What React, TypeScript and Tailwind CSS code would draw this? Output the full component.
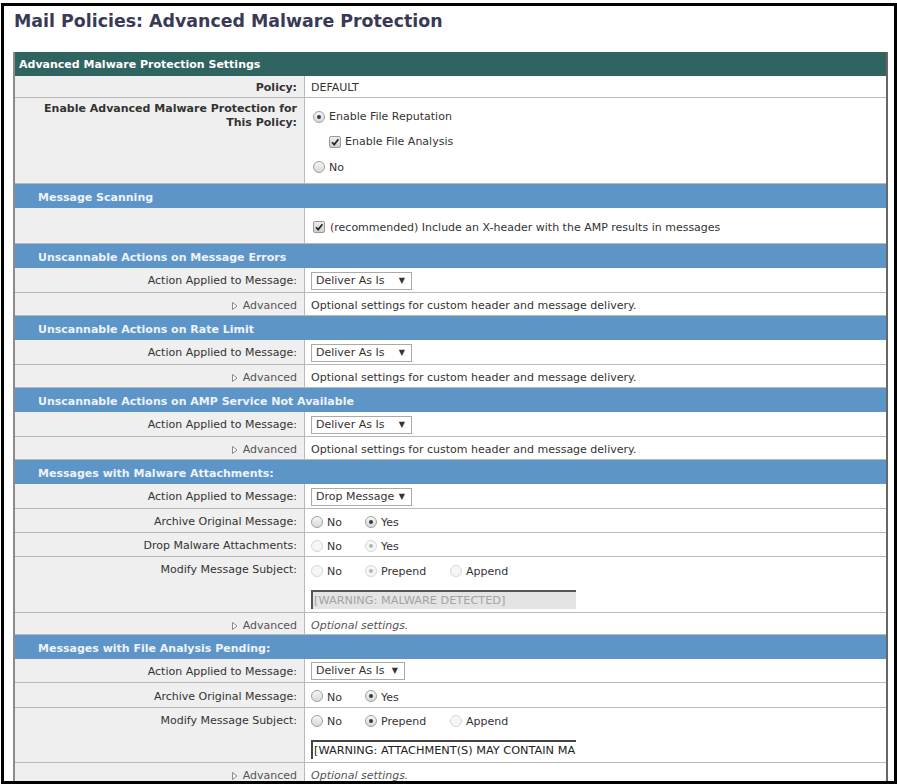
import * as React from 'react'

// Mail policy AMP settings page — table of sections, label column on the left

function Radio({ checked, disabled }: { checked?: boolean; disabled?: boolean }) {
  return (
    <span
      className={`flex h-[12px] w-[12px] shrink-0 items-center justify-center rounded-full border ${
        disabled
          ? 'border-[#d6d6d6] bg-[#f6f6f6]'
          : 'border-[#a0a0a0] bg-linear-to-b from-[#f7f7f7] to-[#d8d8d8]'
      }`}
    >
      {checked && (
        <span
          className={`h-[4px] w-[4px] rounded-full ${
            disabled ? 'bg-[#b5b5b5]' : 'bg-[#3a3a3a]'
          }`}
        />
      )}
    </span>
  )
}

function Checkbox() {
  return (
    <span className="flex h-[12px] w-[12px] shrink-0 items-center justify-center rounded-[2px] border border-[#9a9a9a] bg-linear-to-b from-[#eeeeee] to-[#cfcfcf]">
      <svg width="10" height="10" viewBox="0 0 10 10">
        <path d="M2 5.2 L4.2 7.6 L8.4 2.2" fill="none" stroke="#262626" strokeWidth="1.7" />
      </svg>
    </span>
  )
}

interface Opt {
  label: string
  checked?: boolean
  disabled?: boolean
  width: string
}

function RadioGroup({ options }: { options: Opt[] }) {
  return (
    <div className="flex items-center">
      {options.map((o) => (
        <span key={o.label} className={`flex items-center ${o.width}`}>
          <Radio checked={o.checked} disabled={o.disabled} />
          <span className="ml-[4px] mt-[3px]">{o.label}</span>
        </span>
      ))}
    </div>
  )
}

function FakeSelect({ value, width }: { value: string; width: string }) {
  return (
    <div
      className={`flex h-[18px] items-center justify-between border border-[#aaaaaa] bg-white pl-[4px] pr-[6px] ${width}`}
    >
      <span>{value}</span>
      <span className="text-[8px] leading-none">▼</span>
    </div>
  )
}

function Header({ title }: { title: string }) {
  return (
    <div className="flex h-[24px] items-center bg-[#5d95c9] pl-[23px] pt-[4px] font-bold text-[#eef3f9]">
      {title}
    </div>
  )
}

function Row({
  h,
  label,
  labelCls = 'items-center pt-[2px]',
  valueCls = 'items-center pt-[2px]',
  children,
}: {
  h: string
  label?: React.ReactNode
  labelCls?: string
  valueCls?: string
  children?: React.ReactNode
}) {
  return (
    <div className={`flex border-b border-[#b9b9b9] ${h}`}>
      <div
        className={`flex w-[290px] shrink-0 justify-end border-r border-[#b9b9b9] bg-[#efefef] pr-[7px] text-right ${labelCls}`}
      >
        {label}
      </div>
      <div className={`flex min-w-0 flex-1 bg-white pl-[6px] ${valueCls}`}>{children}</div>
    </div>
  )
}

function AdvancedLabel() {
  return (
    <span className="flex items-center text-[#555555]">
      <svg width="6" height="8" viewBox="0 0 6 8" className="mr-[5px]">
        <polygon points="0.5,0.5 5,4 0.5,7.5" fill="white" stroke="#8a8a8a" />
      </svg>
      Advanced
    </span>
  )
}

function AdvancedRow({ h, italic }: { h: string; italic?: boolean }) {
  return (
    <Row
      h={h}
      label={<AdvancedLabel />}
      labelCls="items-center pt-[4px]"
      valueCls="items-center pt-[4px]"
    >
      {italic ? (
        <span className="italic text-[#555555]">Optional settings.</span>
      ) : (
        <span>Optional settings for custom header and message delivery.</span>
      )}
    </Row>
  )
}

function UnscannableSection({ title }: { title: string }) {
  return (
    <>
      <Header title={title} />
      <Row h="h-[25px]" label="Action Applied to Message:" valueCls="items-center pt-[1px]">
        <FakeSelect value="Deliver As Is" width="w-[101px]" />
      </Row>
      <AdvancedRow h="h-[23px]" />
    </>
  )
}

export default function App() {
  return (
    <div className="h-[784px] w-[897px] overflow-hidden bg-white pt-[3px] pl-[1px] font-['DejaVu_Sans',Verdana,sans-serif]">
      <div className="h-[781px] w-[896px] overflow-hidden border-[3px] border-black">
        <h1 className="ml-[10px] mt-[5px] h-[21px] text-[17.4px] leading-[21px] font-bold text-[#393a56]">
          Mail Policies: Advanced Malware Protection
        </h1>

        <div className="ml-[9px] mt-[20px] w-[875px] border-x-2 border-l-[#8c8c8c] border-r-[#666666] text-[11px] leading-[14px] text-[#333333]">
          <div className="flex h-[24px] items-center bg-[#2f6461] pl-[4px] pt-[2px] font-bold text-white">
            Advanced Malware Protection Settings
          </div>

          <Row h="h-[22px]" label={<span className="font-bold">Policy:</span>}>
            DEFAULT
          </Row>

          <Row
            h="h-[86px]"
            labelCls="items-start pt-[4px]"
            valueCls="flex-col items-start pt-[6px]"
            label={
              <span className="font-bold">
                Enable Advanced Malware Protection for
                <br />
                This Policy:
              </span>
            }
          >
            <div className="flex h-[25px] items-center pl-[2px]">
              <Radio checked />
              <span className="ml-[4px] mt-[1px]">Enable File Reputation</span>
            </div>
            <div className="flex h-[25px] items-center pl-[18px]">
              <Checkbox />
              <span className="ml-[4px] mt-[1px]">Enable File Analysis</span>
            </div>
            <div className="flex h-[25px] items-center pl-[2px]">
              <Radio />
              <span className="ml-[4px] mt-[3px]">No</span>
            </div>
          </Row>

          <Header title="Message Scanning" />
          <Row h="h-[36px]" valueCls="items-center pt-[3px]">
            <div className="flex items-center pl-[2px]">
              <Checkbox />
              <span className="ml-[5px] mt-[1px]">
                (recommended) Include an X-header with the AMP results in messages
              </span>
            </div>
          </Row>

          <UnscannableSection title="Unscannable Actions on Message Errors" />
          <UnscannableSection title="Unscannable Actions on Rate Limit" />
          <UnscannableSection title="Unscannable Actions on AMP Service Not Available" />

          <Header title="Messages with Malware Attachments:" />
          <Row h="h-[25px]" label="Action Applied to Message:" valueCls="items-center pt-[1px]">
            <FakeSelect value="Drop Message" width="w-[101px]" />
          </Row>
          <Row h="h-[24px]" label="Archive Original Message:" labelCls="items-center pt-[3px]">
            <RadioGroup
              options={[
                { label: 'No', width: 'w-[54px]' },
                { label: 'Yes', checked: true, width: 'w-[85px]' },
              ]}
            />
          </Row>
          <Row h="h-[24px]" label="Drop Malware Attachments:" labelCls="items-center pt-[3px]">
            <RadioGroup
              options={[
                { label: 'No', disabled: true, width: 'w-[54px]' },
                { label: 'Yes', checked: true, disabled: true, width: 'w-[85px]' },
              ]}
            />
          </Row>
          <Row
            h="h-[56px]"
            label="Modify Message Subject:"
            labelCls="items-start pt-[6px]"
            valueCls="flex-col items-start pt-[1px]"
          >
            <div className="flex h-[25px] items-center">
              <RadioGroup
                options={[
                  { label: 'No', disabled: true, width: 'w-[54px]' },
                  { label: 'Prepend', checked: true, disabled: true, width: 'w-[85px]' },
                  { label: 'Append', disabled: true, width: 'w-[60px]' },
                ]}
              />
            </div>
            <div className="mt-[7px] flex h-[19px] w-[265px] items-center overflow-hidden whitespace-nowrap border-l-2 border-t-2 border-[#555555] border-b-[#e0e0e0] border-r-[#e0e0e0] bg-[#e4e4e4] pl-[1px] text-[11.3px] text-[#a3a3a3]">
              [WARNING: MALWARE DETECTED]
            </div>
          </Row>
          <AdvancedRow h="h-[22px]" italic />

          <Header title="Messages with File Analysis Pending:" />
          <Row h="h-[24px]" label="Action Applied to Message:" valueCls="items-center pt-[1px]">
            <FakeSelect value="Deliver As Is" width="w-[94px]" />
          </Row>
          <Row h="h-[25px]" label="Archive Original Message:" labelCls="items-center pt-[3px]">
            <RadioGroup
              options={[
                { label: 'No', width: 'w-[54px]' },
                { label: 'Yes', checked: true, width: 'w-[85px]' },
              ]}
            />
          </Row>
          <Row
            h="h-[55px]"
            label="Modify Message Subject:"
            labelCls="items-start pt-[6px]"
            valueCls="flex-col items-start pt-[0px]"
          >
            <div className="flex h-[25px] items-center">
              <RadioGroup
                options={[
                  { label: 'No', width: 'w-[54px]' },
                  { label: 'Prepend', checked: true, width: 'w-[85px]' },
                  { label: 'Append', disabled: true, width: 'w-[60px]' },
                ]}
              />
            </div>
            <div className="mt-[7px] flex h-[19px] w-[265px] items-center overflow-hidden whitespace-nowrap border-l-2 border-t-2 border-[#444444] bg-white pl-[1px] text-[11.3px] text-[#222222]">
              [WARNING: ATTACHMENT(S) MAY CONTAIN MALWARE]
            </div>
          </Row>
          <AdvancedRow h="h-[22px]" italic />
        </div>
      </div>
    </div>
  )
}
